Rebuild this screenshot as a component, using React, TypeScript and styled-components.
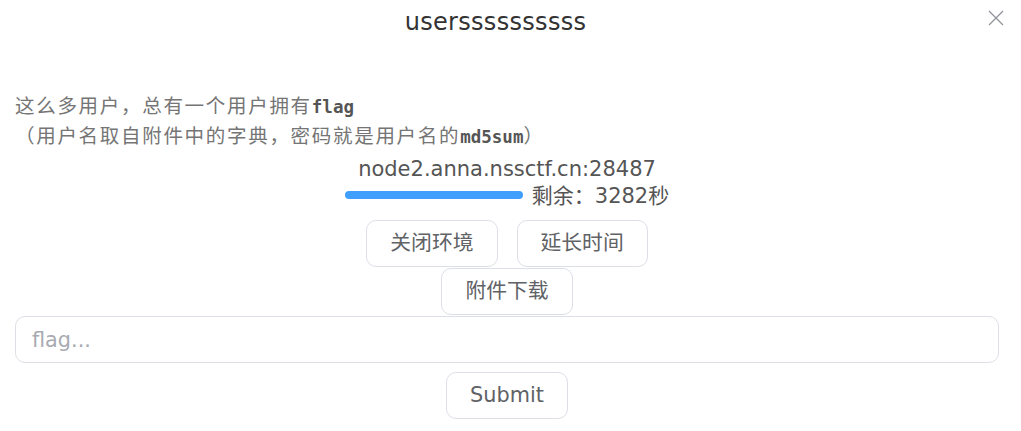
import React from "react";
import styled, { createGlobalStyle } from "styled-components";

const Global = createGlobalStyle`
  html, body { margin: 0; padding: 0; background: #fff; }
  body { font-family: "DejaVu Sans", "Noto Sans CJK SC", sans-serif; }
  * { box-sizing: border-box; }
`;

const Panel = styled.div`
  width: 1021px;
  height: 431px;
  background: #fff;
  overflow: hidden;
`;

const Header = styled.div`
  position: relative;
  height: 44px;
  display: flex;
  align-items: center;
  justify-content: center;
  padding-right: 30px;
`;

const Title = styled.h3`
  margin: 0;
  font-size: 24px;
  font-weight: normal;
  letter-spacing: 0.3px;
  color: #333;
  line-height: 44px;
`;

const Close = styled.button`
  position: absolute;
  right: 16px;
  top: 9px;
  width: 18px;
  height: 18px;
  padding: 0;
  border: none;
  background: none;
  display: flex;
  align-items: center;
  justify-content: center;
`;

const Body = styled.div`
  padding: 46px 22px 0 15px;
  display: flex;
  flex-direction: column;
  align-items: center;
`;

const Desc = styled.div`
  align-self: stretch;
  font-family: "Noto Sans CJK SC", sans-serif;
  font-size: 19.5px;
  color: #757575;
  letter-spacing: 1.7px;
`;

const DescLine = styled.div`
  height: 30px;
  line-height: 30px;
  white-space: nowrap;
  overflow: visible;
`;

const Code = styled.code`
  font-family: "DejaVu Sans Mono", monospace;
  font-weight: bold;
  font-size: 17.5px;
  line-height: 1;
  letter-spacing: 0;
  color: #555;
`;

const Host = styled.div`
  margin-top: 7px;
  font-size: 21px;
  line-height: 25px;
  color: #555;
`;

const ProgressRow = styled.div`
  display: flex;
  align-items: center;
  gap: 9px;
  height: 24px;
  font-size: 21px;
  color: #555;
`;

const Bar = styled.div`
  width: 178px;
  height: 8px;
  border-radius: 4px;
  background: #409eff;
  margin-top: 1px;
`;

const ButtonRow = styled.div<{ $top: number }>`
  display: flex;
  justify-content: center;
  gap: 19px;
  margin-top: ${(p) => p.$top}px;
`;

const Btn = styled.button`
  height: 47px;
  padding: 0 23px;
  border: 1px solid #dcdfe6;
  border-radius: 10px;
  background: #fff;
  color: #606266;
  font-family: "DejaVu Sans", "Noto Sans CJK SC", sans-serif;
  font-size: 20.8px;
  line-height: 1;
  cursor: pointer;
`;

const FlagInput = styled.input`
  align-self: stretch;
  margin-top: 1px;
  height: 47px;
  border: 1px solid #dcdfe6;
  border-radius: 10px;
  padding: 0 16px;
  font-family: "DejaVu Sans", sans-serif;
  font-size: 20.8px;
  color: #555;
  outline: none;
  &::placeholder { color: #a8abb2; }
`;

export default function App() {
  return (
    <Panel>
      <Global />
      <Header>
        <Title>userssssssssss</Title>
        <Close aria-label="close">
          <svg width="16" height="16" viewBox="0 0 16 16">
            <path d="M1 1 L15 15 M15 1 L1 15" stroke="#909399" strokeWidth="1.3" fill="none" />
          </svg>
        </Close>
      </Header>
      <Body>
        <Desc>
          <DescLine>
            这么多用户，总有一个用户拥有<Code>flag</Code>
          </DescLine>
          <DescLine>
            （用户名取自附件中的字典，密码就是用户名的<Code>md5sum</Code>）
          </DescLine>
        </Desc>
        <Host>node2.anna.nssctf.cn:28487</Host>
        <ProgressRow>
          <Bar />
          <span>剩余：3282秒</span>
        </ProgressRow>
        <ButtonRow $top={14}>
          <Btn>关闭环境</Btn>
          <Btn>延长时间</Btn>
        </ButtonRow>
        <ButtonRow $top={1}>
          <Btn>附件下载</Btn>
        </ButtonRow>
        <FlagInput placeholder="flag..." />
        <ButtonRow $top={9}>
          <Btn>Submit</Btn>
        </ButtonRow>
      </Body>
    </Panel>
  );
}
